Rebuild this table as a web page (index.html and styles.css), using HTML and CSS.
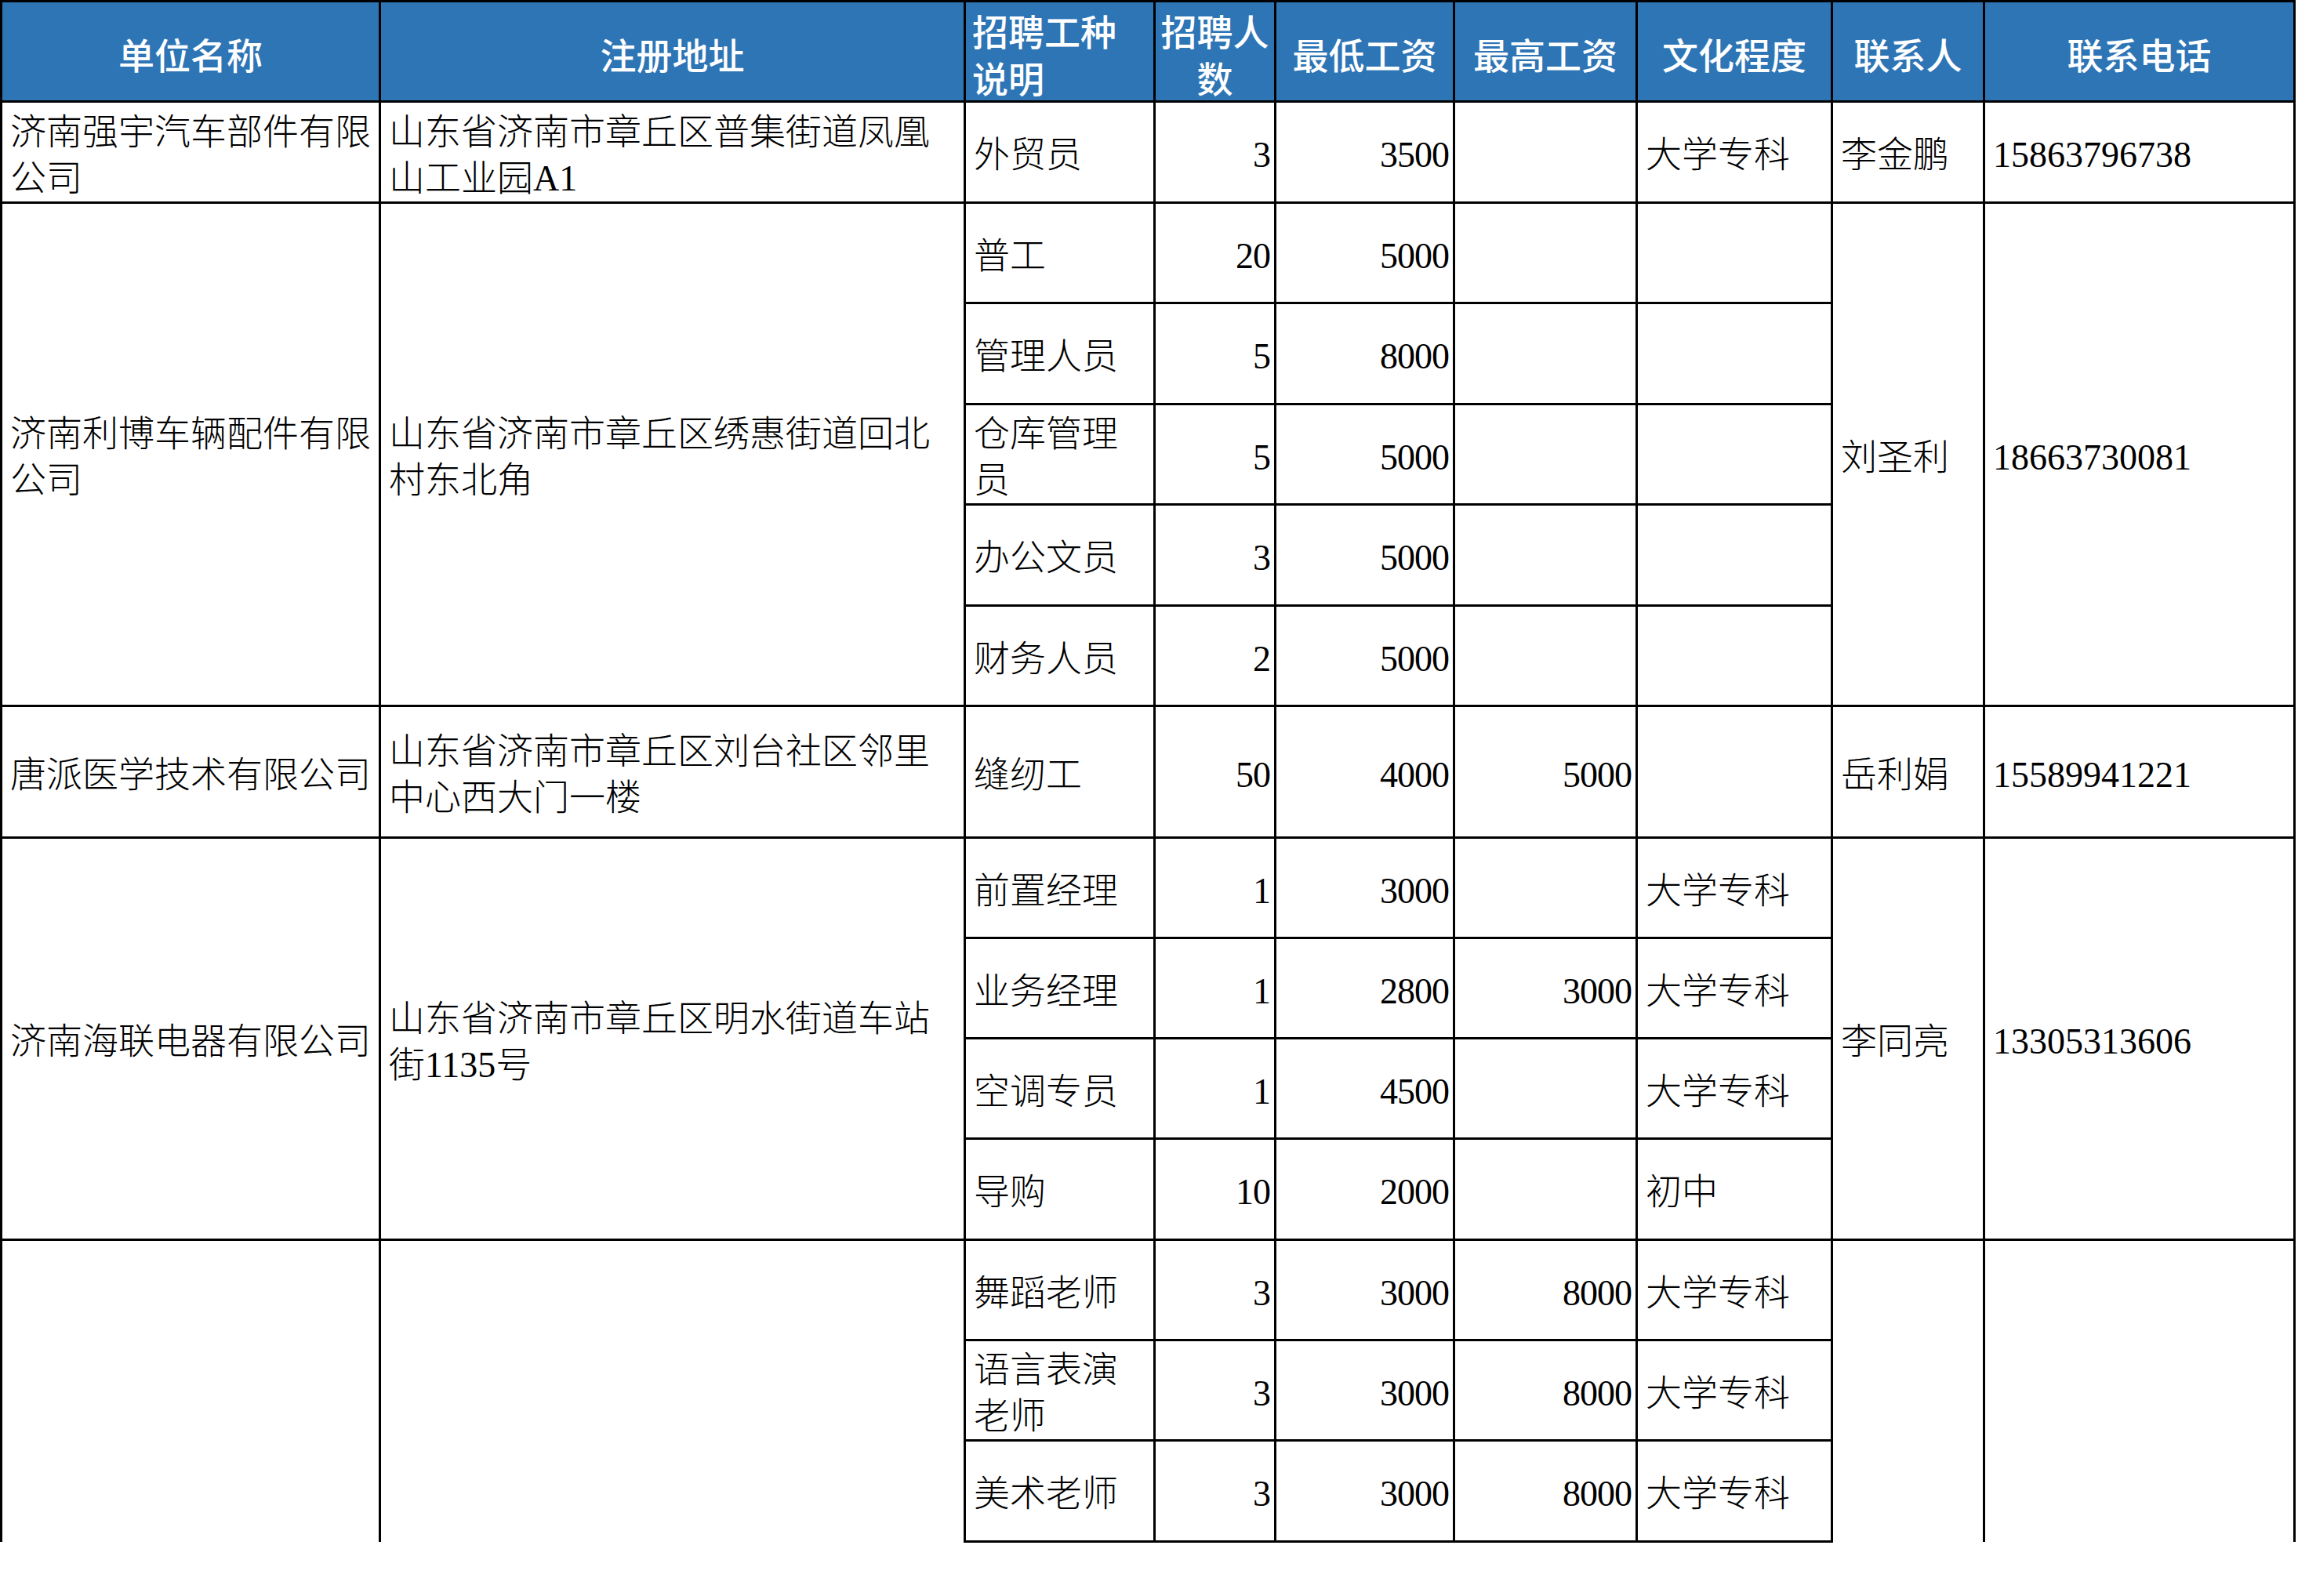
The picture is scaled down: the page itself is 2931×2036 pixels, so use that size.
FILE: index.html
```html
<!DOCTYPE html>
<html lang="zh-CN">
<head>
<meta charset="utf-8">
<title>招聘信息</title>
<link rel="stylesheet" href="styles.css">
</head>
<body>
<table class="sheet">
  <colgroup>
    <col class="c-name"><col class="c-addr"><col class="c-job"><col class="c-num"><col class="c-min"><col class="c-max"><col class="c-edu"><col class="c-contact"><col class="c-phone">
  </colgroup>
  <thead>
    <tr class="r128">
      <th>单位名称</th><th>注册地址</th><th class="left">招聘工种说明</th><th>招聘人数</th><th>最低工资</th><th>最高工资</th><th>文化程度</th><th>联系人</th><th>联系电话</th>
    </tr>
  </thead>
  <tbody>
    <tr class="r129">
      <td>济南强宇汽车部件有限公司</td><td>山东省济南市章丘区普集街道凤凰山工业园A1</td><td>外贸员</td><td class="n">3</td><td class="n">3500</td><td class="n"></td><td>大学专科</td><td>李金鹏</td><td>15863796738</td>
    </tr>

    <tr class="r128">
      <td rowspan="5">济南利博车辆配件有限公司</td><td rowspan="5">山东省济南市章丘区绣惠街道回北村东北角</td><td>普工</td><td class="n">20</td><td class="n">5000</td><td class="n"></td><td></td><td rowspan="5">刘圣利</td><td rowspan="5">18663730081</td>
    </tr>
    <tr class="r129"><td>管理人员</td><td class="n">5</td><td class="n">8000</td><td class="n"></td><td></td></tr>
    <tr class="r128"><td>仓库管理员</td><td class="n">5</td><td class="n">5000</td><td class="n"></td><td></td></tr>
    <tr class="r129"><td>办公文员</td><td class="n">3</td><td class="n">5000</td><td class="n"></td><td></td></tr>
    <tr class="r128"><td>财务人员</td><td class="n">2</td><td class="n">5000</td><td class="n"></td><td></td></tr>

    <tr class="r168">
      <td>唐派医学技术有限公司</td><td>山东省济南市章丘区刘台社区邻里中心西大门一楼</td><td>缝纫工</td><td class="n">50</td><td class="n">4000</td><td class="n">5000</td><td></td><td>岳利娟</td><td>15589941221</td>
    </tr>

    <tr class="r128">
      <td rowspan="4">济南海联电器有限公司</td><td rowspan="4">山东省济南市章丘区明水街道车站街1135号</td><td>前置经理</td><td class="n">1</td><td class="n">3000</td><td class="n"></td><td>大学专科</td><td rowspan="4">李同亮</td><td rowspan="4">13305313606</td>
    </tr>
    <tr class="r128"><td>业务经理</td><td class="n">1</td><td class="n">2800</td><td class="n">3000</td><td>大学专科</td></tr>
    <tr class="r128"><td>空调专员</td><td class="n">1</td><td class="n">4500</td><td class="n"></td><td>大学专科</td></tr>
    <tr class="r129"><td>导购</td><td class="n">10</td><td class="n">2000</td><td class="n"></td><td>初中</td></tr>

    <tr class="r128">
      <td rowspan="3" class="open"></td><td rowspan="3" class="open"></td><td>舞蹈老师</td><td class="n">3</td><td class="n">3000</td><td class="n">8000</td><td>大学专科</td><td rowspan="3" class="open"></td><td rowspan="3" class="open"></td>
    </tr>
    <tr class="r128"><td>语言表演老师</td><td class="n">3</td><td class="n">3000</td><td class="n">8000</td><td>大学专科</td></tr>
    <tr class="r129"><td>美术老师</td><td class="n">3</td><td class="n">3000</td><td class="n">8000</td><td>大学专科</td></tr>
  </tbody>
</table>
</body>
</html>
```

FILE: styles.css
```css
html, body {
  margin: 0;
  padding: 0;
  background: #ffffff;
}

body {
  width: 2931px;
  height: 2036px;
  overflow: hidden;
}

.sheet {
  border-collapse: collapse;
  table-layout: fixed;
  width: 2928px;
  font-family: "Liberation Serif", "Noto Sans CJK SC", serif;
  font-size: 46px;
  font-weight: 300;
  color: #000000;
}

.c-name { width: 483px; }
.c-addr { width: 746px; }
.c-job { width: 242px; }
.c-num { width: 154px; }
.c-min { width: 228px; }
.c-max { width: 233px; }
.c-edu { width: 249px; }
.c-contact { width: 194px; }
.c-phone { width: 396px; }

.r128 { height: 128px; }
.r129 { height: 129px; }
.r168 { height: 168px; }

.sheet th,
.sheet td {
  border: 3px solid #000000;
  padding: 7px 5px 0 10px;
  vertical-align: middle;
  line-height: 59px;
  text-align: left;
  word-break: break-all;
  overflow: hidden;
}

.sheet th {
  background: #2e75b6;
  color: #ffffff;
  font-family: "Noto Sans CJK SC", sans-serif;
  font-weight: 500;
  line-height: 60px;
  text-align: center;
  padding: 4px 4px 0 4px;
}

.sheet th.left {
  text-align: left;
  padding-left: 8px;
}

.sheet td.n {
  text-align: right;
  padding: 7px 5px 0 4px;
  letter-spacing: -1px;
}

.sheet td.open {
  border-bottom: none;
}
```
